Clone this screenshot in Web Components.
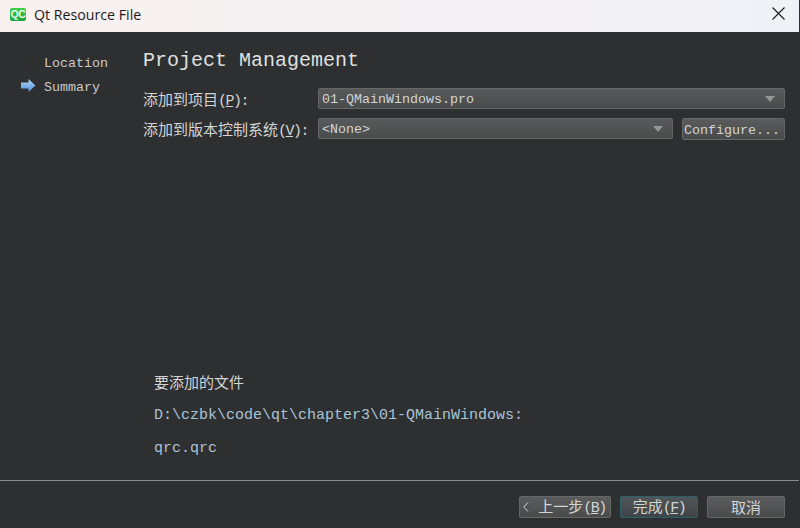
<!DOCTYPE html>
<html lang="zh-CN">
<head>
<meta charset="utf-8">
<title>Qt Resource File</title>
<style>
  html, body { margin: 0; background: #2e2f30; }
  body { font-family: "Liberation Mono", "Noto Sans CJK SC", monospace; }
</style>
</head>
<body>
<qt-dialog heading="Qt Resource File">
  <wizard-side slot="side">
    <side-step>Location</side-step>
    <side-step current>Summary</side-step>
  </wizard-side>

  <page-title>Project Management</page-title>
  <form-row>
    <form-label><zh-label text="添加到项目" key="P"></zh-label></form-label>
    <combo-box>01-QMainWindows.pro</combo-box>
  </form-row>
  <form-row>
    <form-label><zh-label text="添加到版本控制系统" key="V"></zh-label></form-label>
    <combo-box>&lt;None&gt;</combo-box>
    <qt-button style="width:103px;margin-left:9px;padding:2px 3px 0 0">Configure...</qt-button>
  </form-row>

  <file-summary slot="bottom" heading="要添加的文件">
    <div>D:\czbk\code\qt\chapter3\01-QMainWindows:</div>
    <div>qrc.qrc</div>
  </file-summary>

  <qt-button slot="footer" style="width:92px" back><zh-label text="上一步" key="B" plain></zh-label></qt-button>
  <qt-button slot="footer" style="width:78px" focused><zh-label text="完成" key="F" plain></zh-label></qt-button>
  <qt-button slot="footer" style="width:78px"><zh-label text="取消" plain></zh-label></qt-button>
</qt-dialog>

<script>
const FONT_CJK = '"Noto Sans CJK SC", sans-serif';

class QtDialog extends HTMLElement {
  constructor() {
    super();
    const root = this.attachShadow({ mode: 'open' });
    root.innerHTML = `
      <style>
        :host { display: flex; flex-direction: column; width: 800px; height: 528px; background: #2e2f30; overflow: hidden; }
        .bar { display: flex; align-items: center; height: 32px; flex: none; margin-right: 1px; padding: 0 14px 4px 10px; box-sizing: border-box;
               background: linear-gradient(90deg, #f9f1f0, #f0f1f7); color: #1c1c1c;
               font: 14.2px "Open Sans", "Noto Sans", sans-serif; }
        .logo { width: 16px; height: 13px; margin-right: 8px; border-radius: 2px; background: linear-gradient(#3fcf4f, #1aa53a);
                color: #e8fbe8; font: bold 10.5px/13px "Liberation Sans", sans-serif; letter-spacing: -0.4px; text-align: center; }
        .name { flex: 1; }
        .close { display: block; margin-bottom: 2px; }
        .body { flex: 1; display: flex; min-height: 0; }
        .main { flex: 1; display: flex; flex-direction: column; padding-right: 15px; min-width: 0; }
        .top { flex: 1; }
        .footer { flex: none; height: 48px; border-top: 1px solid #8b8c8c; margin-right: 1px; box-sizing: border-box;
                  display: flex; justify-content: flex-end; align-items: flex-start; gap: 9px; padding: 15px 14px 0 0; }
      </style>
      <div class="bar">
        <div class="logo">QC</div>
        <div class="name"></div>
        <svg class="close" width="13" height="13" viewBox="0 0 13 13"><path d="M.5.5l12 12M12.5.5l-12 12" stroke="#1a1a1a" stroke-width="1.1" fill="none"/></svg>
      </div>
      <div class="body">
        <slot name="side"></slot>
        <div class="main">
          <div class="top"><slot></slot></div>
          <slot name="bottom"></slot>
        </div>
      </div>
      <div class="footer"><slot name="footer"></slot></div>`;
    root.querySelector('.name').textContent = this.getAttribute('heading');
  }
}

class WizardSide extends HTMLElement {
  constructor() {
    super();
    this.attachShadow({ mode: 'open' }).innerHTML = `
      <style>
        :host { display: flex; flex-direction: column; flex: none; width: 143px; box-sizing: border-box; padding-top: 23px; gap: 8px; }
      </style>
      <slot></slot>`;
  }
}

class SideStep extends HTMLElement {
  constructor() {
    super();
    this.attachShadow({ mode: 'open' }).innerHTML = `
      <style>
        :host { display: flex; align-items: center; height: 16px; padding-left: 21px; color: #c9caca; font-size: 13.33px; }
        svg { width: 15px; height: 13px; margin: 0 8px 4px 0; flex: none; visibility: hidden; }
        :host([current]) svg { visibility: visible; }
      </style>
      <svg viewBox="0 0 15 13">
        <defs><linearGradient id="a" x1="0" y1="0" x2="0" y2="1"><stop offset="0" stop-color="#b7d7f7"/><stop offset="1" stop-color="#4a8edb"/></linearGradient></defs>
        <path d="M0 3.500h7.500V0l7 6.500-7 6.500V9.500H0z" fill="url(#a)"/>
      </svg>
      <slot></slot>`;
  }
}

class PageTitle extends HTMLElement {
  constructor() {
    super();
    this.attachShadow({ mode: 'open' }).innerHTML = `
      <style>
        :host { display: block; height: 24px; margin: 17px 0 15px; color: #dfe0e0; font-size: 20px; line-height: 24px; }
      </style>
      <slot></slot>`;
  }
}

class FormRow extends HTMLElement {
  constructor() {
    super();
    this.attachShadow({ mode: 'open' }).innerHTML = `
      <style>
        :host { display: flex; align-items: flex-start; height: 22px; margin-bottom: 8px; }
      </style>
      <slot></slot>`;
  }
}

class FormLabel extends HTMLElement {
  constructor() {
    super();
    this.attachShadow({ mode: 'open' }).innerHTML = `
      <style>
        :host { display: block; flex: none; width: 175px; height: 22px; line-height: 20px; color: #d3d4d4; }
      </style>
      <slot></slot>`;
  }
}

// chinese caption with the (X) mnemonic and optional colon
class ZhLabel extends HTMLElement {
  constructor() {
    super();
    const key = this.getAttribute('key');
    const colon = this.hasAttribute('plain') ? '' : '<span class="l">:</span>';
    this.attachShadow({ mode: 'open' }).innerHTML = `
      <style>
        :host { display: inline-block; white-space: nowrap; }
        :host([plain]) { margin-bottom: 2px; }
        .z { font: 15px ${FONT_CJK}; }
        .l { font: 15px "Liberation Mono", monospace; letter-spacing: -1.5px; }
        u { text-underline-offset: 1px; }
      </style>
      <span class="z">${this.getAttribute('text')}</span>${key ? `<span class="l">(<u>${key}</u>)</span>` : ''}${colon}`;
  }
}

class ComboBox extends HTMLElement {
  constructor() {
    super();
    this.attachShadow({ mode: 'open' }).innerHTML = `
      <style>
        :host { display: flex; align-items: center; flex: 1; min-width: 0; height: 21px; box-sizing: border-box; padding: 0 9px 0 3px;
                border: 1px solid #666767; border-radius: 2px; background: linear-gradient(#58595a, #4a4b4b);
                color: #d3d4d4; font-size: 13.33px; }
        .text { flex: 1; padding-top: 2px; }
        svg { display: block; }
      </style>
      <div class="text"><slot></slot></div>
      <svg width="10" height="6" viewBox="0 0 10 6"><path d="M0 0h10L5 6z" fill="#959696"/></svg>`;
  }
}

class QtButton extends HTMLElement {
  constructor() {
    super();
    this.attachShadow({ mode: 'open' }).innerHTML = `
      <style>
        :host { display: flex; align-items: center; justify-content: center; flex: none; height: 22px; box-sizing: border-box; position: relative;
                border: 1px solid #666767; border-radius: 2px; background: linear-gradient(#5a5b5c, #4a4b4b);
                color: #d3d4d4; font-size: 13.33px; white-space: nowrap; }
        :host([focused]) { border-color: #2f5f6a; background: linear-gradient(#505658, #3f4547); }
        :host([back]) { padding-left: 14px; }
        svg { display: none; position: absolute; left: 3px; top: 5px; }
        :host([back]) svg { display: block; }
      </style>
      <svg width="6" height="10" viewBox="0 0 6 10"><path d="M5 .5L.8 5 5 9.500" stroke="#d3d4d4" fill="none"/></svg>
      <slot></slot>`;
  }
}

class FileSummary extends HTMLElement {
  constructor() {
    super();
    const root = this.attachShadow({ mode: 'open' });
    root.innerHTML = `
      <style>
        :host { display: block; height: 108px; padding-left: 11px; color: #a9c3d6; font-size: 15px; }
        .h { font: 15px/20px ${FONT_CJK}; color: #d3d4d4; }
        ::slotted(div) { margin-top: 13px; height: 21px; line-height: 21px; }
        ::slotted(div:last-child) { margin-top: 12px; }
      </style>
      <div class="h"></div>
      <slot></slot>`;
    root.querySelector('.h').textContent = this.getAttribute('heading');
  }
}

customElements.define('qt-dialog', QtDialog);
customElements.define('wizard-side', WizardSide);
customElements.define('side-step', SideStep);
customElements.define('page-title', PageTitle);
customElements.define('form-row', FormRow);
customElements.define('form-label', FormLabel);
customElements.define('zh-label', ZhLabel);
customElements.define('combo-box', ComboBox);
customElements.define('qt-button', QtButton);
customElements.define('file-summary', FileSummary);
</script>
</body>
</html>
